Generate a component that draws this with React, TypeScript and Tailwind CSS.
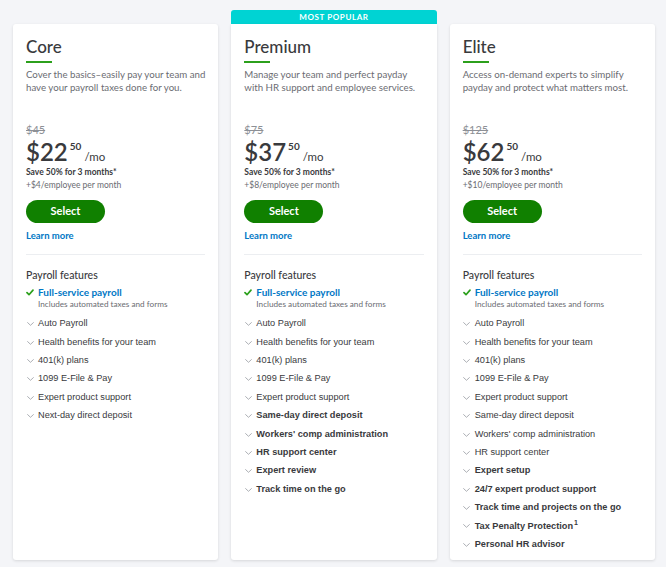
import React from 'react';

type Feature = { label: string; bold?: boolean; sup?: string };

type Plan = {
  name: string;
  desc: string[];
  oldPrice: string;
  price: string;
  cents: string;
  perEmployee: string;
  popular?: boolean;
  features: Feature[];
};

const base: Feature[] = [
  { label: 'Auto Payroll' },
  { label: 'Health benefits for your team' },
  { label: '401(k) plans' },
  { label: '1099 E-File & Pay' },
  { label: 'Expert product support' },
];

const PLANS: Plan[] = [
  {
    name: 'Core',
    desc: ['Cover the basics\u2013easily pay your team and', 'have your payroll taxes done for you.'],
    oldPrice: '$45',
    price: '22',
    cents: '50',
    perEmployee: '+$4/employee per month',
    features: [...base, { label: 'Next-day direct deposit' }],
  },
  {
    name: 'Premium',
    desc: ['Manage your team and perfect payday', 'with HR support and employee services.'],
    oldPrice: '$75',
    price: '37',
    cents: '50',
    perEmployee: '+$8/employee per month',
    popular: true,
    features: [
      ...base,
      { label: 'Same-day direct deposit', bold: true },
      { label: "Workers' comp administration", bold: true },
      { label: 'HR support center', bold: true },
      { label: 'Expert review', bold: true },
      { label: 'Track time on the go', bold: true },
    ],
  },
  {
    name: 'Elite',
    desc: ['Access on-demand experts to simplify', 'payday and protect what matters most.'],
    oldPrice: '$125',
    price: '62',
    cents: '50',
    perEmployee: '+$10/employee per month',
    features: [
      ...base,
      { label: 'Same-day direct deposit' },
      { label: "Workers' comp administration" },
      { label: 'HR support center' },
      { label: 'Expert setup', bold: true },
      { label: '24/7 expert product support', bold: true },
      { label: 'Track time and projects on the go', bold: true },
      { label: 'Tax Penalty Protection', bold: true, sup: '1' },
      { label: 'Personal HR advisor', bold: true },
    ],
  },
];

const Check = () => (
  <svg width="8" height="7" viewBox="0 0 8 7" fill="none" stroke="#2ca01c" strokeWidth="1.7" strokeLinecap="round" strokeLinejoin="round">
    <path d="M1 3.7l2 2L7 1.1" />
  </svg>
);

const Chevron = () => (
  <svg width="7" height="4" viewBox="0 0 7 4" fill="none" stroke="#a3a6ac" strokeWidth="0.9" strokeLinecap="round" strokeLinejoin="round">
    <path d="M0.6 0.6L3.5 3.3 6.4 0.6" />
  </svg>
);

const PlanCard = ({ plan }: { plan: Plan }) => (
  <div className="flex flex-col">
    {plan.popular ? (
      <div className="h-[14px] bg-[#00d3d3] rounded-t-[3px] flex items-center justify-center text-white text-[8px] font-bold tracking-[0.6px] font-['Lato',sans-serif]">
        MOST POPULAR
      </div>
    ) : (
      <div className="h-[14px]" />
    )}
    <div className={`flex-1 bg-white shadow-[0_1px_3px_rgba(0,0,0,0.12)] px-[13px] pt-[11px] ${plan.popular ? 'rounded-b-[3px]' : 'rounded-[3px]'}`}>
      <div className="font-['Lato',sans-serif] text-[17px] leading-[24px] font-medium text-[#393a3d]">{plan.name}</div>
      <div className="mt-[2px] h-[2px] w-[26px] bg-[#2ca01c]" />
      <div className="mt-[5px] font-['Lato',sans-serif] text-[9.7px] leading-[13px] text-[#6b6c72] whitespace-nowrap">
        {plan.desc.map((l) => (
          <div key={l}>{l}</div>
        ))}
      </div>
      <div className="mt-[29px] font-['Lato',sans-serif] text-[11px] leading-[14px] text-[#8d9096] line-through">{plan.oldPrice}</div>
      <div className="mt-[1px] flex items-start h-[28px] font-['Lato',sans-serif] text-[#393a3d]">
        <span className="text-[24px] leading-[28px] font-semibold">${plan.price}</span>
        <span className="text-[10px] leading-[12px] font-bold ml-[2px] mt-[2px]">{plan.cents}</span>
        <span className="text-[11.5px] leading-[12px] ml-[3px] mt-[13px]">/mo</span>
      </div>
      <div className="font-['Lato',sans-serif] text-[8.5px] leading-[12px] font-bold text-[#393a3d]">Save 50% for 3 months*</div>
      <div className="mt-[1px] font-['Lato',sans-serif] text-[8.5px] leading-[12px] text-[#6b6c72]">{plan.perEmployee}</div>
      <button className="mt-[9px] h-[23px] w-[79px] rounded-full bg-[#108000] text-white text-[11px] font-bold font-['Lato',sans-serif] flex items-center justify-center">
        Select
      </button>
      <div className="mt-[7px] font-['Lato',sans-serif] text-[9.5px] leading-[12px] font-bold text-[#0077c5]">Learn more</div>
      <div className="mt-[12px] h-px bg-[#eceef1]" />
      <div className="mt-[14px] font-['Lato',sans-serif] text-[10.5px] leading-[12px] font-medium text-[#393a3d]">Payroll features</div>
      <div className="mt-[5px] flex items-center gap-[4px]">
        <span className="w-[8px] flex justify-center">
          <Check />
        </span>
        <span className="font-['Lato',sans-serif] text-[10px] leading-[13px] font-bold text-[#0077c5]">Full-service payroll</span>
      </div>
      <div className="pl-[12px] font-['Lato',sans-serif] text-[8.2px] leading-[11px] text-[#6b6c72] whitespace-nowrap">Includes automated taxes and forms</div>
      <div className="mt-[5px] pb-[6px]">
        {plan.features.map((f) => (
          <div key={f.label} className="flex items-center gap-[4px] h-[18.4px]">
            <span className="w-[8px] flex justify-center">
              <Chevron />
            </span>
            <span className={`font-['Liberation_Sans',Arial,sans-serif] text-[9.2px] text-[#393a3d] whitespace-nowrap ${f.bold ? 'font-bold' : ''}`}>
              {f.label}
              {f.sup && <sup className="text-[7px] ml-[1px]">{f.sup}</sup>}
            </span>
          </div>
        ))}
      </div>
    </div>
  </div>
);

export default function App() {
  return (
    <div className="w-[666px] h-[567px] bg-[#f4f5f8] overflow-hidden">
      <div className="grid grid-cols-3 gap-[13px] pl-[13px] pr-[11px] pt-[10px] h-[558px]">
        {PLANS.map((p) => (
          <PlanCard key={p.name} plan={p} />
        ))}
      </div>
    </div>
  );
}
